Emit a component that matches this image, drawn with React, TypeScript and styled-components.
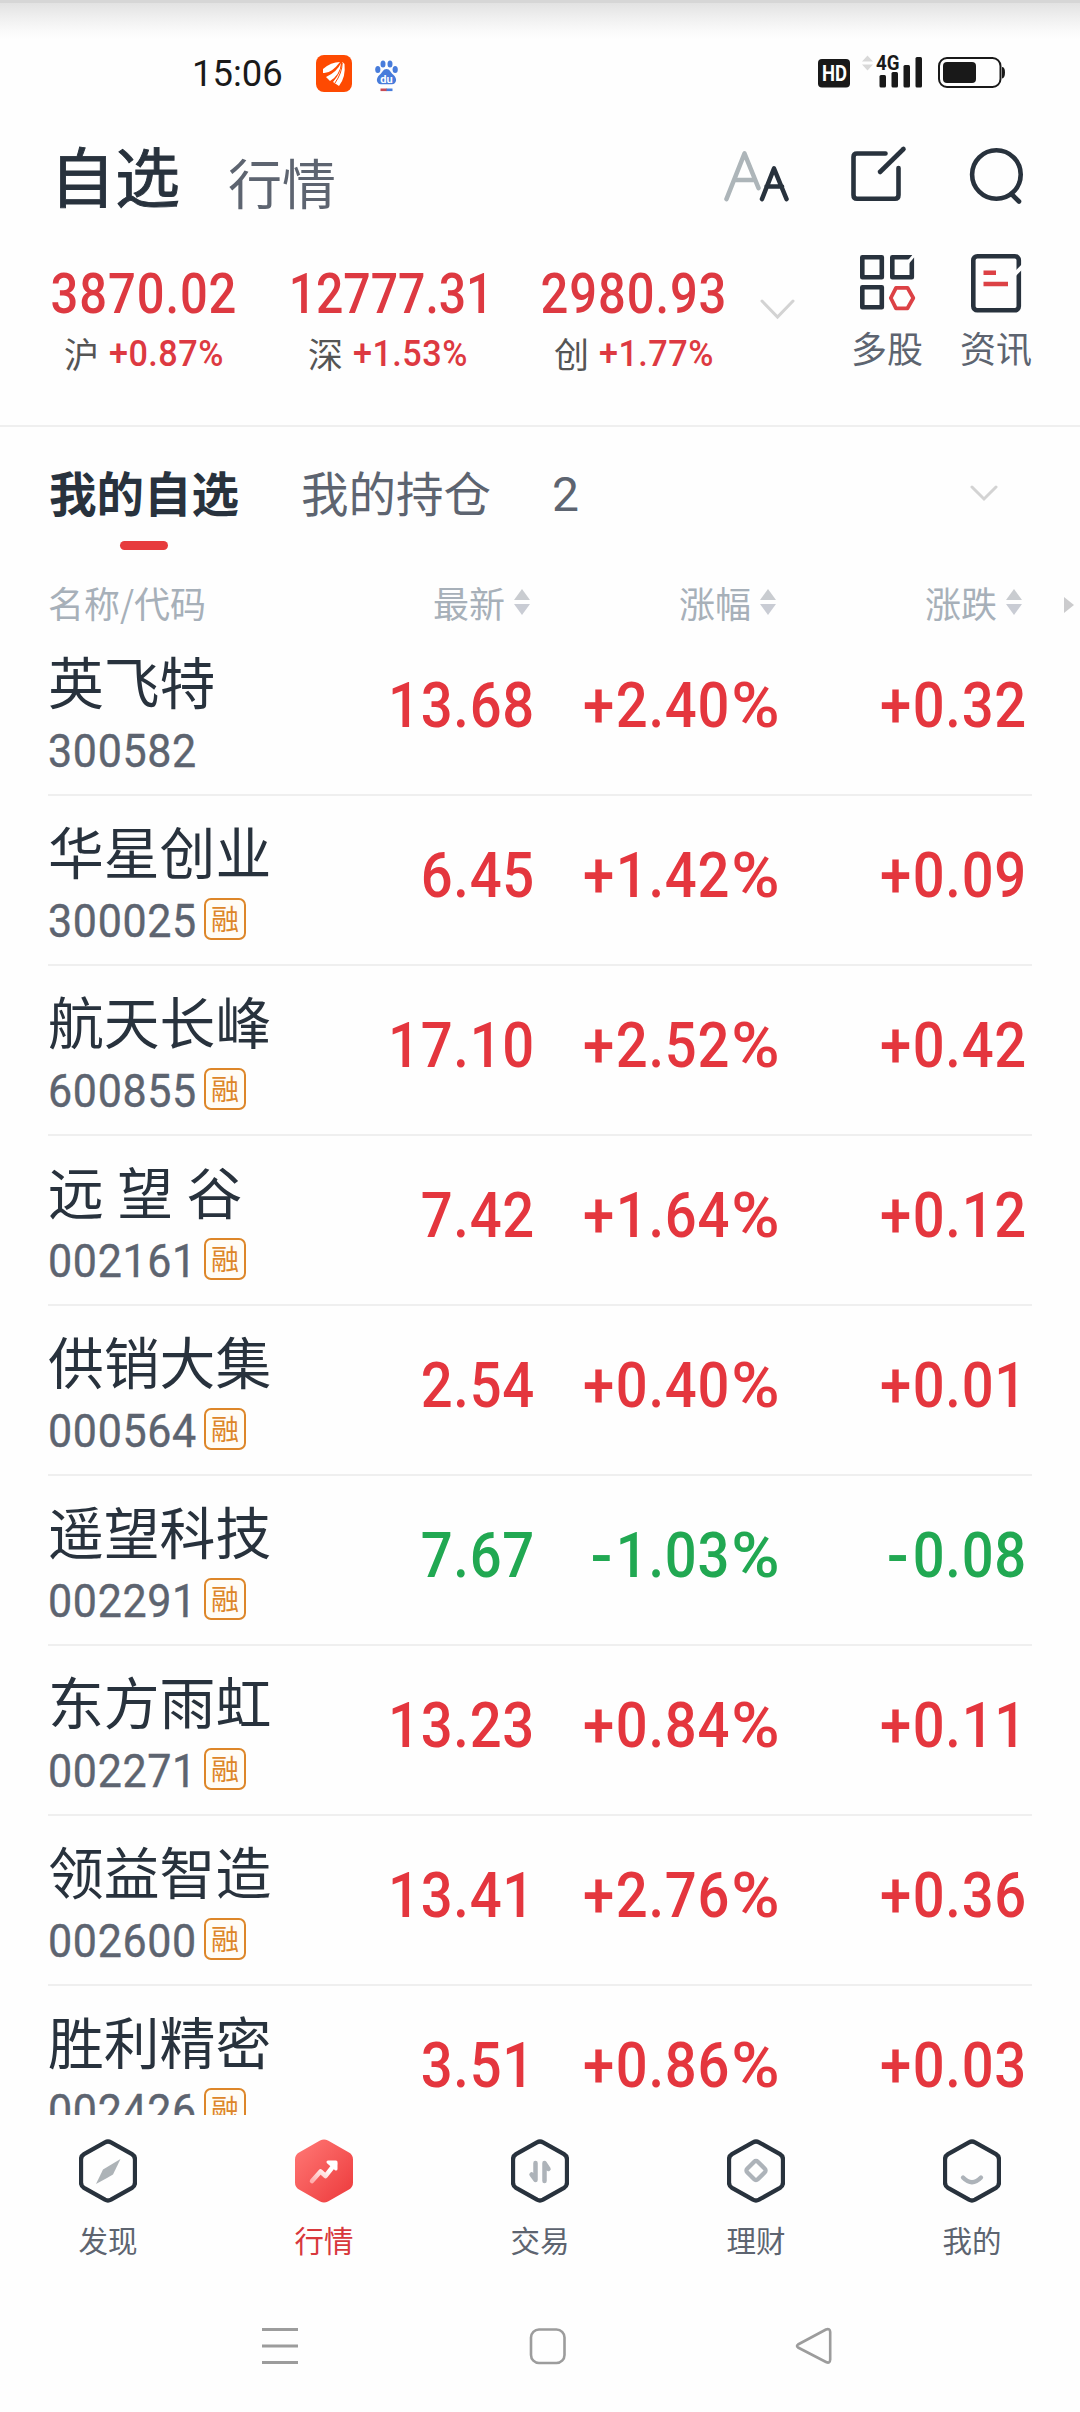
import React from "react";
import styled, { createGlobalStyle, css } from "styled-components";

const CJK = `"Noto Sans CJK SC", sans-serif`;
const NUM = `Roboto, "Noto Sans CJK SC", sans-serif`;

const C = {
  bg: "#fefefe",
  ink: "#28323d",
  sub: "#5d6470",
  faint: "#a7b0b9",
  up: "#e4363e",
  index: "#dd3941",
  down: "#21a852",
  line: "#efefef",
  badge: "#dd8629",
  nav: "#9c9c9c",
};

const GlobalStyle = createGlobalStyle`
  * { box-sizing: border-box; }
  body { margin: 0; background: ${C.bg}; font-family: ${CJK}; }
`;

const Screen = styled.div`
  width: 1080px;
  height: 2412px;
  overflow: hidden;
  display: flex;
  flex-direction: column;
  background: ${C.bg};
  white-space: nowrap;
`;

/* Status bar */
const StatusBar = styled.header`
  height: 110px;
  flex: none;
  display: flex;
  align-items: flex-start;
  border-top: 3px solid #d6d6d6;
  padding: 50px 74px 0 192px;
  background: linear-gradient(#e2e2e2 0, #efefef 14px, #f9f9f9 27px, ${C.bg} 37px);
`;

const Clock = styled.span`
  width: 124px;
  height: 40px;
  margin-top: 1px;
  font: 400 37px/40px ${NUM};
  color: #1a1a1a;
  transform: scaleX(0.985);
  transform-origin: left;
`;

const StatusSpacer = styled.span`
  flex: 1;
`;

/* Title row */
const TitleRow = styled.div`
  height: 132px;
  flex: none;
  display: flex;
  align-items: flex-start;
  padding-left: 50px;
`;

const PageTitle = styled.h1<{ $active?: boolean }>`
  margin: 0;
  font-family: ${CJK};
  ${(p) =>
    p.$active
      ? css`
          font-size: 65px;
          font-weight: 400;
          -webkit-text-stroke: 0.9px ${C.ink};
          line-height: 96px;
          width: 178px;
          padding-top: 16px;
          color: ${C.ink};
        `
      : css`
          font-size: 54px;
          font-weight: 400;
          line-height: 80px;
          padding-top: 32px;
          color: ${C.sub};
        `}
`;

const TitleActions = styled.div`
  display: flex;
  margin-left: auto;
  padding: 34px 52px 0 0;
`;

/* Index strip */
const IndexStrip = styled.section`
  height: 185px;
  flex: none;
  display: flex;
  border-bottom: 2px solid ${C.line};
`;

const IndexItem = styled.div<{ $w: number; $left?: number }>`
  width: ${(p) => p.$w}px;
  margin-left: ${(p) => p.$left ?? 0}px;
  display: flex;
  flex-direction: column;
  align-items: center;
`;

const IndexValue = styled.div<{ $long?: boolean }>`
  margin-top: 21px;
  font: 500 55px/62px ${NUM};
  letter-spacing: ${(p) => (p.$long ? 0 : 1)}px;
  color: ${C.index};
  transform: ${(p) => (p.$long ? "translateX(3px) scaleX(0.875)" : "scaleX(0.89)")};
`;

const IndexMeta = styled.div`
  display: flex;
  gap: 10px;
  align-items: center;
  height: 50px;
  margin-top: 4px;
`;

const IndexName = styled.span`
  font: 400 35px/46px ${CJK};
  color: #555;
  margin-top: -2px;
`;

const IndexChange = styled.span`
  width: 115px;
  font: 500 36px/46px ${NUM};
  letter-spacing: 0.5px;
  color: ${C.index};
  transform: scaleX(0.95);
  transform-origin: left;
`;

const Chevron = styled.div<{ $top: number; $left: number }>`
  margin: ${(p) => p.$top}px 0 0 ${(p) => p.$left}px;
  svg { display: block; }
`;

const Shortcut = styled.div<{ $left: number }>`
  margin: 10px 0 0 ${(p) => p.$left}px;
  width: 72px;
  display: flex;
  flex-direction: column;
  align-items: center;
  font: 400 36px/50px ${CJK};
  color: ${C.sub};
  svg { display: block; margin-bottom: 8px; }
`;

/* Tabs */
const Tabs = styled.nav`
  height: 150px;
  flex: none;
  display: flex;
  padding-left: 49px;
`;

const Tab = styled.div<{ $active?: boolean }>`
  margin-right: 62px;
  padding-top: 30px;
  display: flex;
  flex-direction: column;
  align-items: center;
  font: ${(p) => (p.$active ? 700 : 400)} 47.5px/70px ${CJK};
  color: ${(p) => (p.$active ? C.ink : C.sub)};
`;

const TabMark = styled.span`
  width: 48px;
  height: 9px;
  margin-top: 14px;
  border-radius: 5px;
  background: #e73b3d;
`;

const TabNumber = styled.div`
  width: 24px;
  padding-top: 34px;
  margin-left: -1px;
  font: 400 48px/68px ${NUM};
  color: ${C.sub};
`;

/* Table */
const grid = css`
  display: grid;
  grid-template-columns: 224px 262px 246px 246px;
`;

const TableHead = styled.div`
  ${grid}
  height: 50px;
  flex: none;
  padding-left: 48px;
  position: relative;
  font: 400 36px/50px ${CJK};
  color: ${C.faint};
`;

const HeadCell = styled.span<{ $sort?: boolean }>`
  display: flex;
  align-items: center;
  justify-content: ${(p) => (p.$sort ? "flex-end" : "flex-start")};
  gap: 9px;
  padding-right: ${(p) => (p.$sort ? 4 : 0)}px;
`;

const MoreArrow = styled.i`
  position: absolute;
  left: 1064px;
  top: 20px;
  border-left: 10px solid #cbcbcd;
  border-top: 8px solid transparent;
  border-bottom: 8px solid transparent;
`;

const Rows = styled.main`
  height: 1488px;
  flex: none;
  overflow: hidden;
  padding: 0 48px;
`;

const Row = styled.div`
  ${grid}
  width: 984px;
  height: 170px;
  border-bottom: 2px solid ${C.line};
  &:first-child { height: 169px; }
  &:first-child > * { margin-top: -1px; }
`;

const Stock = styled.div`
  padding-top: 12px;
`;

const StockName = styled.div`
  font: 400 55.8px/84px ${CJK};
  color: ${C.ink};
  white-space: pre;
  word-spacing: 1px;
`;

const StockMeta = styled.div`
  display: flex;
  height: 56px;
`;

const Code = styled.span`
  width: 156px;
  flex: none;
  margin-top: 2px;
  font: 400 46.5px/54px ${NUM};
  -webkit-text-stroke: 0.4px ${C.sub};
  letter-spacing: 0.7px;
  color: ${C.sub};
  transform: scaleX(0.925);
  transform-origin: left;
`;

const Badge = styled.span`
  width: 42px;
  height: 42px;
  margin-top: 6px;
  flex: none;
  border: 2px solid ${C.badge};
  border-radius: 7px;
  background: #fffdf6;
  color: ${C.badge};
  font: 400 28px/36px ${CJK};
  text-align: center;
`;

const Cell = styled.div<{ $down?: boolean }>`
  padding-top: 43px;
  text-align: right;
  font: 500 63.5px/74px ${NUM};
  letter-spacing: 0.8px;
  color: ${(p) => (p.$down ? C.down : C.up)};
  transform: translateX(1px) scaleX(0.885);
  transform-origin: right;
`;

const Percent = styled.span`
  display: inline-block;
  margin-left: 10px;
  transform: scaleX(1.17);
  transform-origin: right;
`;

const Sign = styled.span<{ $minus: boolean }>`
  display: inline-block;
  margin-right: ${(p) => (p.$minus ? 3 : 1)}px;
  transform: scaleX(${(p) => (p.$minus ? 1.15 : 1)});
  transform-origin: right;
`;

/* Bottom navigation */
const BottomNav = styled.nav`
  height: 165px;
  flex: none;
  display: grid;
  grid-template-columns: repeat(5, 216px);
`;

const NavItem = styled.div<{ $active?: boolean }>`
  display: flex;
  flex-direction: column;
  align-items: center;
  padding-top: 24px;
  font: 400 29.5px/44px ${CJK};
  color: ${(p) => (p.$active ? "#d8383c" : C.sub)};
  svg { display: block; margin-bottom: 14px; }
`;

const SystemBar = styled.footer`
  flex: 1;
  display: flex;
  align-items: flex-start;
  padding: 46px 0 0 260px;
  gap: 227px;
`;

const SortIcon = () => (
  <svg width="16" height="28" viewBox="0 0 16 28">
    <path d="M8 1 16 12H0Z" fill="#c9ccd0" />
    <path d="M8 27 0 16H16Z" fill="#c9ccd4" />
  </svg>
);

const Down = ({ w, h }: { w: number; h: number }) => (
  <svg width={w} height={h} viewBox={`0 0 ${w} ${h}`} fill="none">
    <path d={`M2 2 ${w / 2} ${h - 3} ${w - 2} 2`} stroke="#d3d3d3" strokeWidth="3" strokeLinecap="round" />
  </svg>
);

const BrokerLogo = () => (
  <svg width="36" height="37" viewBox="0 0 36 37" style={{ marginTop: 2 }}>
    <rect width="36" height="37" rx="8" fill="#fe4a02" />
    <path d="M24 7Q15 7 7 14V18Q15 19 24 7Z" fill="#fff" />
    <path d="M25 8Q21 17 10 22L14 26Q24 20 25 8Z" fill="#fff" />
    <path d="M26.500 7Q25 18 17 27L23 31Q30 22 28.500 9Z" fill="#fff" />
    <path d="M26.200 8Q26 18 19 28" fill="none" stroke="#fe4a02" strokeWidth="1" />
  </svg>
);

const PawLogo = () => (
  <svg width="23" height="32" viewBox="0 0 23 32" style={{ margin: "7px 0 0 23px" }}>
    <g fill="#487cdb">
      <ellipse cx="2.800" cy="9.500" rx="2.600" ry="3.500" />
      <ellipse cx="8" cy="4" rx="2.500" ry="3.600" />
      <ellipse cx="15" cy="4" rx="2.500" ry="3.600" />
      <ellipse cx="20.200" cy="9.500" rx="2.600" ry="3.500" />
      <path d="M11.500 9C15 9 15.500 12.500 18 14.500 23 18.500 21.500 24 17 24.300H6C1.500 24 0 18.500 5 14.500 7.500 12.500 8 9 11.500 9Z" />
    </g>
    <text x="11.500" y="22.500" fontSize="11" fontWeight="700" fontFamily="Roboto" fill="#fff" textAnchor="middle">du</text>
    <path d="M5.500 29.800H12" stroke="#c94b55" strokeWidth="2.600" />
    <path d="M11.500 29.800H17.500" stroke="#487cdb" strokeWidth="2.600" />
  </svg>
);

/* HD mark, network signal and battery */
const StatusIcons = () => (
  <svg width="188" height="44" viewBox="818 49 188 44" fill="#191919" style={{ marginTop: -4 }}>
    <rect x="818" y="59" width="32" height="28.500" rx="4" />
    <text x="822" y="81" fontSize="22" fontWeight="700" fontFamily="Roboto" fill="#fff" textLength="25" lengthAdjust="spacingAndGlyphs">HD</text>
    <path d="M867.500 55.500 873 61.500H862Z M867.500 70.500 862 64.500H873Z" fill="#d9d9d9" />
    <text x="876" y="70" fontSize="21" fontWeight="700" fontFamily="Roboto" textLength="23.500" lengthAdjust="spacingAndGlyphs">4G</text>
    <rect x="879.500" y="75" width="6.500" height="12.500" rx="1.500" />
    <rect x="891.500" y="72" width="6.500" height="15.500" rx="1.500" />
    <rect x="903.500" y="65" width="6.500" height="22.500" rx="1.500" />
    <rect x="915.500" y="57" width="6.500" height="30.500" rx="1.500" />
    <rect x="939" y="58" width="61.500" height="29" rx="8" fill="none" stroke="#191919" strokeWidth="2" />
    <rect x="943" y="62" width="33" height="21" rx="4" />
    <path d="M1002 67Q1005 67 1005 72.500T1002 78.500Z" />
  </svg>
);

/* Text size, edit and search */
const ActionIcons = () => (
  <svg width="304" height="62" viewBox="724 144 304 62" fill="none" strokeLinecap="round" strokeLinejoin="round" strokeWidth="4.600">
    <path d="M726.500 199 744.500 153.500 758.500 188M734 180H755" stroke="#adb5b9" />
    <path d="M762 199 774 168.500 786.500 199M766.500 186.500H782" stroke={C.ink} />
    <g stroke={C.ink}>
      <path d="M885.500 153.500H857Q853.500 153.500 853.500 157V195Q853.500 198.700 857 198.700H895Q898.500 198.700 898.500 195V168" />
      <path d="M880 172 903.500 149" />
      <circle cx="996.400" cy="174.500" r="24.300" />
      <path d="M1011.500 194 1019 201.500" />
    </g>
  </svg>
);

const GridIcon = () => (
  <svg width="58" height="62" viewBox="858 252 58 62" fill="none" strokeWidth="4.600" strokeLinejoin="round">
    <g stroke={C.ink}>
      <rect x="862.300" y="257.300" width="19.500" height="20" />
      <rect x="892.300" y="257.300" width="19.500" height="20" />
      <rect x="862.300" y="287.300" width="19.500" height="20" />
    </g>
    <path d="M905 266 916 253" stroke={C.bg} strokeWidth="3" />
    <path d="M896 287.800H907.500L913.300 298 907.500 308.300H896L890.800 298Z" stroke="#dc4145" strokeWidth="3.800" />
  </svg>
);

const DocIcon = () => (
  <svg width="54" height="62" viewBox="969 252 54 62" fill="none" strokeWidth="4.600">
    <rect x="973.300" y="256.300" width="45.500" height="54" rx="4" stroke={C.ink} />
    <path d="M1012 277 1024 265" stroke={C.bg} strokeWidth="4" />
    <path d="M983.500 272.700H996M983.500 284H1008" stroke="#dc4145" />
  </svg>
);

const HEX = "M26 3.300Q29 1.700 32 3.300L53 15.200Q56 17 56 20.500V43.500Q56 47 53 48.800L32 60.700Q29 62.300 26 60.700L5 48.800Q2 47 2 43.500V20.500Q2 17 5 15.200Z";

type NavKind = "compass" | "trend" | "trade" | "wealth" | "me";

const NavIcon = ({ kind }: { kind: NavKind }) => (
  <svg width="58" height="64" viewBox="0 0 58 64" fill="none" strokeLinecap="round" strokeLinejoin="round">
    <defs>
      <linearGradient id="hot" x1="0" y1="0" x2="1" y2="1">
        <stop offset="0" stopColor="#ff7774" />
        <stop offset="1" stopColor="#ed3b3d" />
      </linearGradient>
      <linearGradient id="arrow" x1="0" y1="1" x2="1" y2="0">
        <stop offset="0" stopColor="#ffaead" />
        <stop offset="0.700" stopColor="#fff" />
      </linearGradient>
    </defs>
    {kind === "trend" ? (
      <>
        <path d={HEX} fill="url(#hot)" stroke="url(#hot)" strokeWidth="4" />
        <path d="M17 42 25.500 32.500 30.500 37 40 25" stroke="url(#arrow)" strokeWidth="4.500" />
        <path d="M33 23H41V30Z" fill="#fff" stroke="#fff" strokeWidth="3" />
      </>
    ) : (
      <path d={HEX} stroke={C.ink} strokeWidth="4.300" />
    )}
    {kind === "compass" && <path d="M41.500 20 34 35.500 28 39 17 45 24 30.500Z" fill="#adb3b7" />}
    {kind === "trade" && (
      <g stroke="#adb3b9" strokeWidth="4.500">
        <path d="M24.500 24V41L20.500 35.500" />
        <path d="M33.500 42V24L37.500 30" />
      </g>
    )}
    {kind === "wealth" && (
      <rect x="21.500" y="24" width="15" height="15" rx="2.500" transform="rotate(45 29 31.500)" stroke="#adb3b9" strokeWidth="4.300" />
    )}
    {kind === "me" && <path d="M20 38.500Q29 48 38 38.500" stroke="#adb3b9" strokeWidth="4.300" />}
  </svg>
);

const indices = [
  { name: "沪", value: "3870.02", change: "+0.87%", w: 200, left: 44 },
  { name: "深", value: "12777.31", change: "+1.53%", w: 220, left: 34 },
  { name: "创", value: "2980.93", change: "+1.77%", w: 200, left: 36 },
];

const stocks = [
  { name: "英飞特", code: "300582", price: "13.68", pct: "+2.40", diff: "+0.32", margin: false },
  { name: "华星创业", code: "300025", price: "6.45", pct: "+1.42", diff: "+0.09", margin: true },
  { name: "航天长峰", code: "600855", price: "17.10", pct: "+2.52", diff: "+0.42", margin: true },
  { name: "远 望 谷", code: "002161", price: "7.42", pct: "+1.64", diff: "+0.12", margin: true },
  { name: "供销大集", code: "000564", price: "2.54", pct: "+0.40", diff: "+0.01", margin: true },
  { name: "遥望科技", code: "002291", price: "7.67", pct: "-1.03", diff: "-0.08", margin: true },
  { name: "东方雨虹", code: "002271", price: "13.23", pct: "+0.84", diff: "+0.11", margin: true },
  { name: "领益智造", code: "002600", price: "13.41", pct: "+2.76", diff: "+0.36", margin: true },
  { name: "胜利精密", code: "002426", price: "3.51", pct: "+0.86", diff: "+0.03", margin: true },
];

const navItems: { label: string; kind: NavKind }[] = [
  { label: "发现", kind: "compass" },
  { label: "行情", kind: "trend" },
  { label: "交易", kind: "trade" },
  { label: "理财", kind: "wealth" },
  { label: "我的", kind: "me" },
];

const Signed = ({ value }: { value: string }) => (
  <>
    <Sign $minus={value[0] === "-"}>{value[0]}</Sign>
    {value.slice(1)}
  </>
);

export default function App() {
  return (
    <Screen>
      <GlobalStyle />
      <StatusBar>
        <Clock>15:06</Clock>
        <BrokerLogo />
        <PawLogo />
        <StatusSpacer />
        <StatusIcons />
      </StatusBar>

      <TitleRow>
        <PageTitle $active>自选</PageTitle>
        <PageTitle>行情</PageTitle>
        <TitleActions>
          <ActionIcons />
        </TitleActions>
      </TitleRow>

      <IndexStrip>
        {indices.map((i) => (
          <IndexItem key={i.name} $w={i.w} $left={i.left}>
            <IndexValue $long={i.value.length > 7}>{i.value}</IndexValue>
            <IndexMeta>
              <IndexName>{i.name}</IndexName>
              <IndexChange>{i.change}</IndexChange>
            </IndexMeta>
          </IndexItem>
        ))}
        <Chevron $top={57} $left={26}>
          <Down w={35} h={21} />
        </Chevron>
        <Shortcut $left={56}>
          <GridIcon />
          多股
        </Shortcut>
        <Shortcut $left={37}>
          <DocIcon />
          资讯
        </Shortcut>
      </IndexStrip>

      <Tabs>
        <Tab $active>
          我的自选
          <TabMark />
        </Tab>
        <Tab>我的持仓</Tab>
        <TabNumber>2</TabNumber>
        <Chevron $top={58} $left={394}>
          <Down w={28} h={17} />
        </Chevron>
      </Tabs>

      <TableHead>
        <HeadCell>名称/代码</HeadCell>
        {["最新", "涨幅", "涨跌"].map((h) => (
          <HeadCell key={h} $sort>
            {h}
            <SortIcon />
          </HeadCell>
        ))}
        <MoreArrow />
      </TableHead>

      <Rows>
        {stocks.map((s) => {
          const down = s.diff.startsWith("-");
          return (
            <Row key={s.code}>
              <Stock>
                <StockName>{s.name}</StockName>
                <StockMeta>
                  <Code>{s.code}</Code>
                  {s.margin && <Badge>融</Badge>}
                </StockMeta>
              </Stock>
              <Cell $down={down}>{s.price}</Cell>
              <Cell $down={down}>
                <Signed value={s.pct} />
                <Percent>%</Percent>
              </Cell>
              <Cell $down={down}>
                <Signed value={s.diff} />
              </Cell>
            </Row>
          );
        })}
      </Rows>

      <BottomNav>
        {navItems.map((n) => (
          <NavItem key={n.kind} $active={n.kind === "trend"}>
            <NavIcon kind={n.kind} />
            {n.label}
          </NavItem>
        ))}
      </BottomNav>

      <SystemBar>
        <svg width="40" height="40" viewBox="0 0 40 40" stroke={C.nav} strokeWidth="3">
          <path d="M2 3.500H38M2 20H38M2 36.500H38" />
        </svg>
        <svg width="40" height="40" viewBox="0 0 40 40" fill="none" stroke={C.nav} strokeWidth="2.600">
          <rect x="4" y="3.500" width="33.500" height="33.500" rx="8" />
        </svg>
        <svg width="40" height="40" viewBox="0 0 40 40" fill="none" stroke={C.nav} strokeWidth="2.600" strokeLinejoin="round">
          <path d="M4 18.500 32 3.500Q36 2 36.200 6V33.500Q36 38 32 36L4 21.500Q2 20 4 18.500Z" />
        </svg>
      </SystemBar>
    </Screen>
  );
}
